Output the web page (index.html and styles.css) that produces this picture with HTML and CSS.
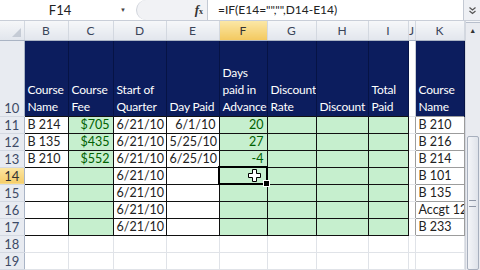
FILE: index.html
```html
<!DOCTYPE html>
<html>
<head>
	<meta charset="utf8">
	<title>Course Fee</title>
	<link rel="stylesheet" href="styles.css">
</head>
<body>
	<div class="janela">
		<div class="barra-formula">
			<div class="caixa-nome">F14</div>
			<div class="seta-nome">&#9660;</div>
			<div class="botoes"><span class="fx"><i>f</i><small>x</small></span></div>
			<div class="formula">=IF(E14="","",D14-E14)</div>
			<div class="expandir">
				<svg width="9" height="9" viewBox="0 0 9 9"><path d="M1.5 1.5l3 2.5 3-2.5M1.5 5l3 2.5 3-2.5" fill="none" stroke="#555" stroke-width="1.2"/></svg>
			</div>
		</div>
		<div class="area">
			<table class="planilha">
				<colgroup>
					<col class="w-num"><col class="w-b"><col class="w-c"><col class="w-d"><col class="w-e"><col class="w-f">
					<col class="w-g"><col class="w-h"><col class="w-i"><col class="w-j"><col class="w-k">
				</colgroup>
				<tr class="cab-col">
					<th class="canto"><span class="triangulo"></span></th>
					<th>B</th><th>C</th><th>D</th><th>E</th><th class="ativo">F</th><th>G</th><th>H</th><th>I</th><th>J</th><th>K</th>
				</tr>
				<tr class="titulos">
					<th class="num">10</th>
					<td>Course Name</td><td>Course Fee</td><td>Start of Quarter</td><td>Day Paid</td><td>Days paid in Advance</td>
					<td>Discount Rate</td><td>Discount</td><td>Total Paid</td><td class="vazio"></td><td>Course Name</td>
				</tr>
				<tr class="dados">
					<th class="num">11</th>
					<td>B 214</td><td class="verde dir">$705</td><td class="dir">6/21/10</td><td class="dir">6/1/10</td><td class="verde dir">20</td>
					<td class="verde"></td><td class="verde"></td><td class="verde"></td><td class="vazio"></td><td class="lista">B 210</td>
				</tr>
				<tr class="dados">
					<th class="num">12</th>
					<td>B 135</td><td class="verde dir">$435</td><td class="dir">6/21/10</td><td class="dir">5/25/10</td><td class="verde dir">27</td>
					<td class="verde"></td><td class="verde"></td><td class="verde"></td><td class="vazio"></td><td class="lista">B 216</td>
				</tr>
				<tr class="dados">
					<th class="num">13</th>
					<td>B 210</td><td class="verde dir">$552</td><td class="dir">6/21/10</td><td class="dir">6/25/10</td><td class="verde dir">-4</td>
					<td class="verde"></td><td class="verde"></td><td class="verde"></td><td class="vazio"></td><td class="lista">B 214</td>
				</tr>
				<tr class="dados">
					<th class="num ativo">14</th>
					<td></td><td class="verde"></td><td class="dir">6/21/10</td><td></td>
					<td class="verde selecionada">
						<svg class="cursor" width="13" height="13" viewBox="0 0 13 13"><path d="M4.5 0.5h4v4h4v4h-4v4h-4v-4h-4v-4h4z" fill="#fff" stroke="#000"/></svg>
						<span class="alca"></span>
					</td>
					<td class="verde"></td><td class="verde"></td><td class="verde"></td><td class="vazio"></td><td class="lista">B 101</td>
				</tr>
				<tr class="dados">
					<th class="num">15</th>
					<td></td><td class="verde"></td><td class="dir">6/21/10</td><td></td><td class="verde"></td>
					<td class="verde"></td><td class="verde"></td><td class="verde"></td><td class="vazio"></td><td class="lista">B 135</td>
				</tr>
				<tr class="dados">
					<th class="num">16</th>
					<td></td><td class="verde"></td><td class="dir">6/21/10</td><td></td><td class="verde"></td>
					<td class="verde"></td><td class="verde"></td><td class="verde"></td><td class="vazio"></td><td class="lista">Accgt 12</td>
				</tr>
				<tr class="dados">
					<th class="num">17</th>
					<td></td><td class="verde"></td><td class="dir">6/21/10</td><td></td><td class="verde"></td>
					<td class="verde"></td><td class="verde"></td><td class="verde"></td><td class="vazio"></td><td class="lista">B 233</td>
				</tr>
				<tr class="livre">
					<th class="num">18</th>
					<td></td><td></td><td></td><td></td><td></td><td></td><td></td><td></td><td></td><td></td>
				</tr>
				<tr class="livre">
					<th class="num">19</th>
					<td></td><td></td><td></td><td></td><td></td><td></td><td></td><td></td><td></td><td></td>
				</tr>
			</table>
			<div class="rolagem">
				<div class="divisor"></div>
				<div class="seta-cima">&#9650;</div>
				<div class="trilho">
					<div class="polegar"><span class="pega"></span></div>
				</div>
			</div>
		</div>
	</div>
</body>
</html>
```

FILE: styles.css
```css
body{
	margin: 0;
	width: 480px;
	height: 270px;
	overflow: hidden;
	background-color: #fff;
	font-family: Lato, "Liberation Sans", sans-serif;
}
.janela{
	width: 480px;
	height: 270px;
	display: flex;
	flex-direction: column;
}
.barra-formula{
	height: 20px;
	display: flex;
	border-bottom: 1px solid #c9ced8;
	background-color: #fff;
	color: #222;
}
.caixa-nome{
	width: 120px;
	font-size: 13px;
	line-height: 20px;
	text-align: center;
}
.seta-nome{
	width: 16px;
	font-size: 6px;
	line-height: 20px;
	color: #444;
}
.botoes{
	width: 71px;
	display: flex;
	justify-content: flex-end;
	align-items: center;
	border-left: 1px solid #cfd3da;
	border-radius: 10px 0 0 10px;
	background-color: #f1f2f5;
	box-sizing: border-box;
}
.fx{
	font-family: "Liberation Serif", serif;
	font-weight: bold;
	font-size: 13px;
	color: #333;
	margin-right: 4px;
}
.fx small{
	font-size: 8px;
}
.formula{
	flex: 1;
	font-size: 12px;
	line-height: 20px;
	padding-left: 10px;
	border-left: 1px solid #c3c9d3;
	white-space: nowrap;
}
.expandir{
	width: 16px;
	display: flex;
	justify-content: center;
	align-items: center;
	border-left: 1px solid #c3c9d3;
	background-color: #eef0f4;
}
.area{
	flex: 1;
	display: flex;
	overflow: hidden;
}
.planilha{
	width: 464px;
	table-layout: fixed;
	border-collapse: collapse;
	font-size: 12.5px;
	color: #222;
}
.w-num{ width: 24px; }
.w-b{ width: 44px; }
.w-c{ width: 45px; }
.w-d{ width: 53px; }
.w-e{ width: 53px; }
.w-f{ width: 48px; }
.w-g{ width: 49px; }
.w-h{ width: 52px; }
.w-i{ width: 40px; }
.w-j{ width: 7px; }
.w-k{ width: 49px; }
td, th{
	padding: 0 3px;
	white-space: nowrap;
	overflow: hidden;
}
.cab-col{
	height: 19px;
}
.cab-col th{
	font-weight: normal;
	font-size: 12px;
	color: #3a4458;
	text-align: center;
	padding: 0;
	background: linear-gradient(#f6f7f9, #e2e6ed);
	border-right: 1px solid #d3d8e0;
	border-bottom: 1px solid #aab4c4;
}
.cab-col th.ativo{
	background: linear-gradient(#fbe7a6, #f3c960);
	color: #333;
}
.canto{
	position: relative;
}
.triangulo{
	position: absolute;
	right: 3px;
	bottom: 3px;
	border-left: 9px solid transparent;
	border-bottom: 9px solid #c5cbd5;
}
.num{
	font-weight: normal;
	font-size: 13px;
	color: #3d4a66;
	text-align: center;
	vertical-align: bottom;
	padding: 0;
	background-color: #e8ebf1;
	border-right: 1px solid #a9b4c6;
	border-bottom: 1px solid #d3d8e1;
}
.num.ativo{
	background: linear-gradient(#fbe6a2, #f5cd6a);
	color: #333;
}
.titulos{
	height: 76px;
}
.titulos td{
	background-color: #0c1d5e;
	color: #fff;
	font-size: 12px;
	letter-spacing: -0.2px;
	line-height: 17px;
	white-space: normal;
	vertical-align: bottom;
	padding: 0 3px 1px 3px;
	border-right: 1px solid #061345;
}
.titulos td.vazio{
	background-color: #fff;
	border-right: 1px solid #c8ccd4;
}
.dados{
	height: 17px;
}
.dados td{
	border: 1px solid #111;
	line-height: 16px;
}
.dados td.vazio{
	border-top: 1px solid #e2e4e8;
	border-bottom: 1px solid #e2e4e8;
	border-right: 1px solid #9c9c9c;
}
.dados td.lista{
	border: 1px solid #9c9c9c;
	text-overflow: clip;
}
.verde{
	background-color: #c6efce;
	color: #006100;
}
.dir{
	text-align: right;
}
.selecionada{
	position: relative;
	outline: 2px solid #000;
	outline-offset: -1px;
	overflow: visible;
}
.cursor{
	position: absolute;
	left: 28px;
	top: 1px;
}
.alca{
	position: absolute;
	right: -3px;
	bottom: -3px;
	width: 5px;
	height: 5px;
	background-color: #000;
	border: 1px solid #fff;
}
.livre{
	height: 17px;
}
.livre td{
	border-right: 1px solid #e0e3e8;
	border-bottom: 1px solid #e0e3e8;
}
.rolagem{
	width: 16px;
	display: flex;
	flex-direction: column;
	background-color: #e9ebf0;
	border-left: 1px solid #d3d7df;
	box-sizing: border-box;
}
.divisor{
	height: 4px;
	border-bottom: 1px solid #b8bfcc;
	background-color: #f4f5f8;
}
.seta-cima{
	height: 15px;
	font-size: 7px;
	line-height: 15px;
	text-align: center;
	color: #333;
}
.trilho{
	flex: 1;
	padding-top: 98px;
}
.polegar{
	height: 132px;
	margin: 0 1px;
	border: 1px solid #a7afbd;
	border-radius: 2px;
	background: linear-gradient(90deg, #f4f5f8, #dfe3ea);
	display: flex;
	justify-content: center;
	align-items: center;
}
.pega{
	width: 7px;
	height: 5px;
	border-top: 1px solid #8e96a6;
	border-bottom: 1px solid #8e96a6;
}
```
